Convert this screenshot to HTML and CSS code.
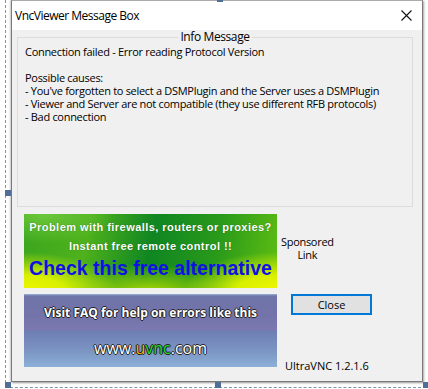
FILE: index.html
```html
<!DOCTYPE html>
<html lang="en">
<head>
    <meta charset="UTF-8">
    <title>VncViewer Message Box</title>
    <link rel="stylesheet" href="styles.css">
</head>
<body>
    <div class="stage">
        <span class="handle handle-top"></span>
        <span class="handle handle-left"></span>
        <span class="handle handle-bl"></span>
        <span class="handle handle-bm"></span>
        <span class="handle handle-br"></span>

        <div class="window">
            <div class="titlebar">
                <span class="title">VncViewer Message Box</span>
                <svg class="close-x" width="11" height="11" viewBox="0 0 11 11">
                    <path d="M0.5 0.5 L10.5 10.5 M10.5 0.5 L0.5 10.5" stroke="#111" stroke-width="1.1" fill="none"/>
                </svg>
            </div>

            <div class="content">
                <fieldset class="group">
                    <legend>Info Message</legend>
                    <p>Connection failed - Error reading Protocol Version</p>
                    <p class="gap">Possible causes:</p>
                    <p>- You've forgotten to select a DSMPlugin and the Server uses a DSMPlugin</p>
                    <p>- Viewer and Server are not compatible (they use different RFB protocols)</p>
                    <p>- Bad connection</p>
                </fieldset>

                <div class="bottom">
                    <div class="banner banner-green">
                        <div class="line1">Problem with firewalls, routers or proxies?</div>
                        <div class="line2">Instant free remote control !!</div>
                        <div class="line3">Check this free alternative</div>
                    </div>
                    <div class="sponsored">Sponsored<br>Link</div>

                    <div class="banner banner-blue">
                        <div class="faq">Visit FAQ for help on errors like this</div>
                        <div class="site">www.<span class="u">u</span><span class="vnc">vnc</span>.com</div>
                    </div>
                    <div class="side">
                        <button class="close-btn">Close</button>
                        <span class="version">UltraVNC 1.2.1.6</span>
                    </div>
                </div>
            </div>
        </div>
    </div>
</body>
</html>
```

FILE: styles.css
```css
body {
    margin: 0;
    background: #ffffff;
    font-family: "Open Sans", "Noto Sans", sans-serif;
    font-size: 12px;
    color: #000;
}
.stage {
    position: relative;
    width: 421px;
    height: 388px;
    margin-left: 5px;
    border-left: 1px dashed #7f93b0;
    border-bottom: 1px dashed #7f93b0;
    padding-left: 5px;
    box-sizing: border-box;
}
.handle {
    position: absolute;
    width: 6px;
    height: 6px;
    background: #4f6f99;
}
.handle-top { left: 211px; top: -4px; }
.handle-left { left: -1px; top: 190px; }
.handle-bl { left: -1px; top: 382px; }
.handle-bm { left: 209px; top: 382px; }
.handle-br { left: 417px; top: 382px; }

.window {
    width: 412px;
    height: 382px;
    box-sizing: border-box;
    border: 1px solid #7a7a7a;
    border-top-color: #aaa;
    background: #f0f0f0;
    box-shadow: 1px 1px 2px rgba(0, 0, 0, 0.35), -1px 0 2px rgba(0, 0, 0, 0.2);
}
.titlebar {
    height: 29px;
    background: #fff;
    display: flex;
    align-items: center;
    justify-content: space-between;
    padding: 0 10px 0 3px;
}
.title {
    font-size: 12px;
    letter-spacing: -0.5px;
}
.content {
    padding: 0 9px 0 5px;
}
.group {
    margin: 0;
    padding: 0 7px 0 7px;
    border: 1px solid #dcdcdc;
    height: 177px;
    box-sizing: border-box;
}
.group legend {
    margin: 0 auto;
    padding: 0 2px;
    font-size: 12px;
    line-height: 14px;
    letter-spacing: -0.4px;
}
.group p {
    margin: 0;
    line-height: 13px;
    font-size: 11px;
    letter-spacing: -0.3px;
}
.group p:first-of-type {
    margin-top: 1px;
}
.group p.gap {
    margin-top: 13px;
}

.bottom {
    display: grid;
    grid-template-columns: 253px 1fr;
    column-gap: 8px;
    row-gap: 6px;
    margin-top: 7px;
    padding-left: 7px;
}
.banner {
    box-sizing: border-box;
    text-align: center;
    font-family: "Liberation Sans", Arial, sans-serif;
    font-weight: bold;
    white-space: nowrap;
}
.banner-green {
    height: 74px;
    background:
        radial-gradient(ellipse 95px 42px at 0 80px, #f4f800 0%, #d8f000 45%, rgba(150, 210, 0, 0) 100%),
        radial-gradient(ellipse 95px 42px at 253px 80px, #f4f800 0%, #d8f000 45%, rgba(150, 210, 0, 0) 100%),
        radial-gradient(ellipse 80px 30px at 125px 80px, #b6e000 0%, rgba(150, 210, 0, 0) 100%),
        radial-gradient(ellipse 70px 30px at 20px 0, #6cc83a 0%, rgba(100, 190, 50, 0) 100%),
        linear-gradient(100deg, #3aa51e 0%, #4fb21c 25%, #0f8622 50%, #2a9a1a 75%, #5fbe12 100%);
    color: #fff;
    padding-top: 5px;
}
.line1, .line2 {
    font-size: 11px;
    line-height: 16px;
    letter-spacing: 0.45px;
    text-shadow: 0 0 1px rgba(0, 60, 0, 0.6);
}
.line2 {
    margin-top: 3px;
}
.line3 {
    font-size: 19.5px;
    line-height: 22px;
    color: #0f0fe6;
    margin-top: 3px;
}
.sponsored {
    justify-self: start;
    align-self: center;
    text-align: center;
    margin-left: -4px;
    margin-top: -7px;
    line-height: 13px;
    font-size: 11px;
    letter-spacing: -0.3px;
}
.banner-blue {
    height: 73px;
    background: linear-gradient(#9db4d8 0, #6e74a8 2px, #7373aa 30%, #7b79b0 36px, #6e7eb3 37px, #7d97c4 80%, #8cb0d8 100%);
    color: #fff;
    text-shadow: 1px 0 0 #222, -1px 0 0 #222, 0 1px 0 #222, 0 -1px 0 #222;
    font-family: "Open Sans", sans-serif;
}
.faq {
    font-size: 12px;
    line-height: 16px;
    padding-top: 11px;
}
.site {
    font-size: 16px;
    line-height: 20px;
    font-weight: normal;
    margin-top: 17px;
}
.site .u { color: #f0b400; }
.site .vnc { color: #22dd22; }

.side {
    display: flex;
    flex-direction: column;
    align-items: flex-start;
    justify-content: space-between;
    padding-left: 6px;
}
.close-btn {
    width: 81px;
    height: 21px;
    border: 2px solid #0078d7;
    background: #e1e1e1;
    font-family: "Open Sans", sans-serif;
    font-size: 11px;
    padding: 0;
}
.version {
    font-size: 11px;
    line-height: 14px;
    margin-left: -6px;
    margin-bottom: -6px;
}
```
